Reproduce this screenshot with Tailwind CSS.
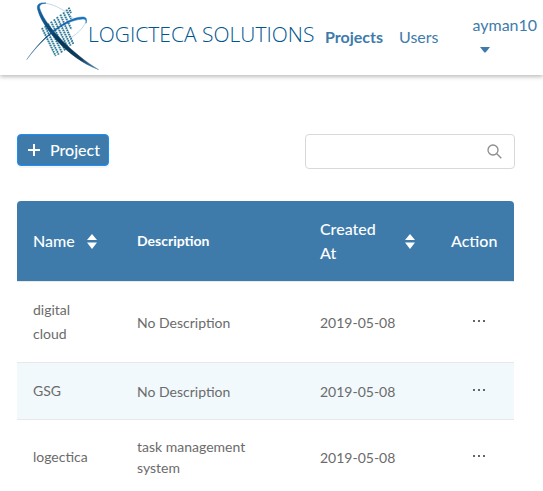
<!DOCTYPE html>
<html lang="en">
<head>
<meta charset="utf-8">
<meta name="viewport" content="width=device-width, initial-scale=1">
<title>Projects - Logicteca Solutions</title>
<script src="https://cdn.jsdelivr.net/npm/@tailwindcss/browser@4"></script>
</head>
<body class="bg-white font-[Lato,sans-serif] text-sm text-[#6b6b6b]">
<header class="flex h-[75px] items-center bg-white pl-6 text-base text-[#3e7bab] shadow-[0_2px_4px_0_rgba(0,0,0,0.25)]">
  <a href="#" class="flex shrink-0 items-center" aria-label="Logicteca Solutions">
    <svg class="h-[72px] w-[76px] shrink-0" viewBox="12 6 228 216" fill="none" aria-hidden="true">
      <defs>
        <linearGradient id="down" x1="55" y1="10" x2="235" y2="210" gradientUnits="userSpaceOnUse">
          <stop offset="0" stop-color="#1769ac"/><stop offset=".5" stop-color="#063454"/><stop offset=".78" stop-color="#123c5b"/><stop offset="1" stop-color="#5b96c1"/>
        </linearGradient>
        <linearGradient id="up" x1="20" y1="180" x2="200" y2="55" gradientUnits="userSpaceOnUse">
          <stop offset="0" stop-color="#6b93b3"/><stop offset=".35" stop-color="#0b4774"/><stop offset=".7" stop-color="#0c5eaa"/><stop offset="1" stop-color="#1c77bd"/>
        </linearGradient>
      </defs>
      <path d="M62 10C92 6 134 29 158 53M199 59C197 77 176 98 151 115" stroke="#c5d8e7" stroke-width="3"/>
      <g stroke="#2b7898" stroke-width="6" stroke-dasharray="5 2">
        <path d="M66 84L107 168M75 78L116 164M84 71L126 158M93 65L135 151M102 58L144 144M111 51L152 137M121 44L160 132M130 37L154 88M139 29L153 57M146 23L153 39"/>
      </g>
      <path d="M78 9C55 7 48 15 54 32C67 80 140 173 236 209C164 167 80 83 61 31C56 16 59 12 78 9Z" fill="url(#down)" stroke="url(#down)" stroke-width="1.5"/>
      <path d="M20 179C71 105 143 51 188 51C199 51 202 57 198 70C200 58 194 56 183 58C138 61 73 107 20 179Z" fill="url(#up)" stroke="url(#up)" stroke-width="1.5"/>
    </svg>
    <span class="-ml-3 mb-2 w-[225px] whitespace-nowrap font-['Open_Sans','Noto_Sans',sans-serif] text-[21px] font-light leading-6 text-[#00568f]">LOGICTECA SOLUTIONS</span>
  </a>
  <nav class="ml-3 flex gap-4 pb-px leading-6">
    <a href="#" class="font-bold">Projects</a>
    <a href="#">Users</a>
  </nav>
  <button type="button" class="ml-[34px] flex shrink-0 flex-col items-start pb-px text-left leading-6">
    <span>ayman10</span>
    <svg class="ml-2 h-6 w-[10px]" viewBox="0 0 10 24" aria-hidden="true"><path d="M0 10H10L6 15Q5 16 4 15Z" fill="#3e7bab"/></svg>
  </button>
</header>
<main class="px-[17px] pt-[59px] pr-[29px]">
  <div class="flex items-start justify-between">
    <button type="button" class="flex h-8 items-center gap-[10px] rounded border border-[#1890ff] bg-[#3e7bab] px-[10px] pr-2 text-base font-medium text-white shadow-[0_2px_0_rgba(0,0,0,0.04)]">
      <svg class="h-3 w-3" viewBox="0 0 12 12" aria-hidden="true"><path d="M0 6H12M6 0V12" stroke="#fff" stroke-width="2"/></svg>
      <span>Project</span>
    </button>
    <label class="-mr-px flex h-[35px] w-[210px] items-center rounded border border-[#d9d9d9] pl-3 pr-3">
      <input type="search" aria-label="Search projects" class="min-w-0 flex-1 bg-transparent outline-none">
      <svg class="h-[15px] w-[15px]" viewBox="0 0 15 15" fill="none" stroke="#8c8c8c" stroke-width="1.3" aria-hidden="true"><circle cx="6" cy="6" r="5"/><path d="M9.5 9.5L14.3 14.3"/></svg>
    </label>
  </div>
  <table class="mt-8 w-full table-fixed border-separate border-spacing-0 text-left">
    <colgroup><col class="w-[104px]"><col><col class="w-[131px]"><col class="w-[79px]"></colgroup>
    <thead class="bg-[#3e7bab] text-base text-white">
      <tr>
        <th class="rounded-tl border-b border-[#e8e8e8] p-4 font-medium" scope="col">
          <button type="button" class="flex items-center gap-3 leading-6"><span>Name</span>
            <svg class="h-[15px] w-[10px]" viewBox="0 0 10 15" fill="#fff" aria-hidden="true"><path d="M5 0L10 6H0ZM0 8.5H10L5 15Z"/></svg></button>
        </th>
        <th class="border-b border-[#e8e8e8] p-4 text-sm font-bold" scope="col">Description</th>
        <th class="border-b border-[#e8e8e8] p-4 font-medium" scope="col">
          <button type="button" class="flex w-full items-center justify-between pr-1 text-left leading-6"><span class="w-16">Created At</span>
            <svg class="h-[15px] w-[10px]" viewBox="0 0 10 15" fill="#fff" aria-hidden="true"><path d="M5 0L10 6H0ZM0 8.5H10L5 15Z"/></svg></button>
        </th>
        <th class="rounded-tr border-b border-[#e8e8e8] p-4 font-medium leading-6" scope="col">Action</th>
      </tr>
    </thead>
    <tbody>
      <tr>
        <td class="border-b border-[#e8e8e8] p-4 leading-6">digital cloud</td>
        <td class="border-b border-[#e8e8e8] p-4 leading-[21px]">No Description</td>
        <td class="border-b border-[#e8e8e8] p-4 leading-[21px]">2019-05-08</td>
        <td class="border-b border-[#e8e8e8] py-4 pl-[38px]"><button type="button" aria-label="Actions for digital cloud"><svg class="h-4 w-3" viewBox="0 0 12 16" fill="#666" aria-hidden="true"><path d="M0 8h2v2H0zM5 8h2v2H5zM10 8h2v2h-2z"/></svg></button></td>
      </tr>
      <tr class="bg-[#f1f9fc]">
        <td class="border-b border-[#e8e8e8] p-4 leading-6">GSG</td>
        <td class="border-b border-[#e8e8e8] p-4 leading-[21px]">No Description</td>
        <td class="border-b border-[#e8e8e8] p-4 leading-[21px]">2019-05-08</td>
        <td class="border-b border-[#e8e8e8] py-4 pl-[38px]"><button type="button" aria-label="Actions for GSG"><svg class="h-4 w-3" viewBox="0 0 12 16" fill="#666" aria-hidden="true"><path d="M0 8h2v2H0zM5 8h2v2H5zM10 8h2v2h-2z"/></svg></button></td>
      </tr>
      <tr>
        <td class="border-b border-[#e8e8e8] p-4 leading-6">logectica</td>
        <td class="border-b border-[#e8e8e8] p-4 leading-[21px]">task management system</td>
        <td class="border-b border-[#e8e8e8] p-4 leading-[21px]">2019-05-08</td>
        <td class="border-b border-[#e8e8e8] py-4 pl-[38px]"><button type="button" aria-label="Actions for logectica"><svg class="h-4 w-3" viewBox="0 0 12 16" fill="#666" aria-hidden="true"><path d="M0 8h2v2H0zM5 8h2v2H5zM10 8h2v2h-2z"/></svg></button></td>
      </tr>
    </tbody>
  </table>
</main>
</body>
</html>
